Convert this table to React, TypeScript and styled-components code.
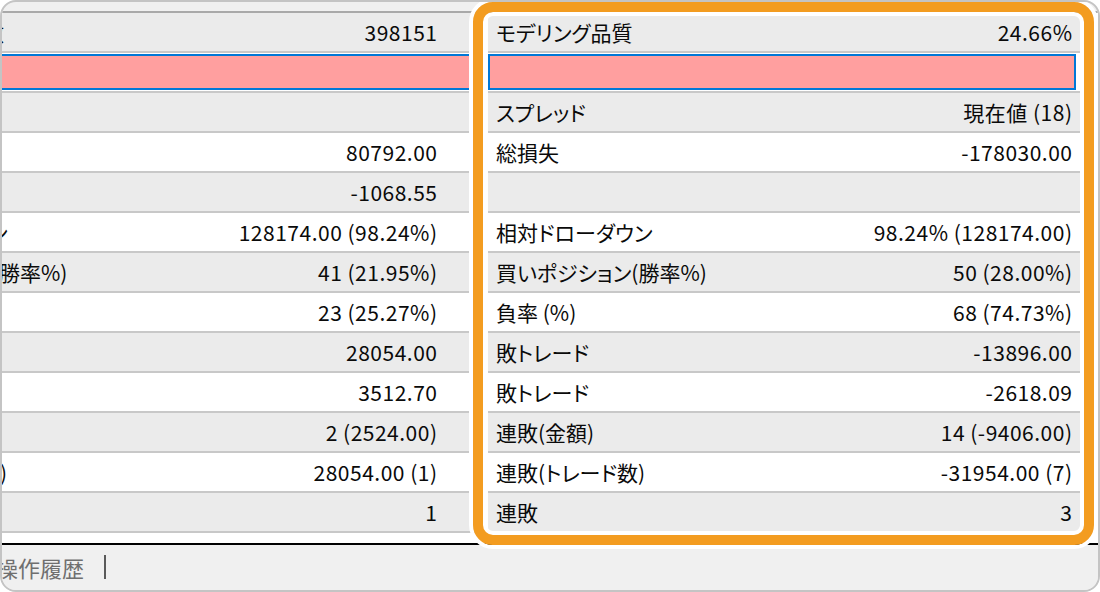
import React from 'react';
import styled, { createGlobalStyle } from 'styled-components';

const Global = createGlobalStyle`
  html, body { margin: 0; padding: 0; background: #fff; }
  body { font-family: "Noto Sans CJK JP", "Noto Sans", sans-serif; }
`;

const Frame = styled.div`
  position: relative;
  box-sizing: border-box;
  width: 1100px;
  height: 592px;
  border: 2px solid #c4c4c4;
  border-radius: 16px;
  background: #f0f0f0;
  overflow: hidden;
  display: flex;
  flex-direction: column;
  font-family: "Noto Sans CJK JP", "Noto Sans", sans-serif;
  font-size: 21px;
  font-feature-settings: "palt";
  color: #0a0a0a;
`;

const TopStrip = styled.div`
  flex: none;
  height: 9px;
  border-bottom: 2px solid #a9a9a9;
`;

const Tables = styled.div`
  flex: none;
  display: grid;
  grid-template-columns: 476px 10px 592px 1fr;
  background: #fff;
`;

const Panel = styled.div`
  display: flex;
  flex-direction: column;
  min-width: 0;
`;

type Tone = 'gray' | 'white';

const Row = styled.div<{ $tone: Tone; $side: 'left' | 'right' }>`
  box-sizing: border-box;
  height: 40px;
  display: flex;
  align-items: center;
  justify-content: space-between;
  border-bottom: 2px solid #c8c8c8;
  background: ${p => (p.$tone === 'gray' ? '#ebebeb' : '#fff')};
  padding: ${p => (p.$side === 'left' ? '0 41px 0 0' : '0 8px 0 8px')};
  white-space: nowrap;
  overflow: hidden;
  line-height: 1;
`;

const SelRow = styled.div<{ $boxed?: boolean }>`
  box-sizing: border-box;
  height: 40px;
  display: flex;
  flex-direction: column;
  background: #fff;
  border-bottom: 2px solid #c8c8c8;
  padding: 1px ${p => (p.$boxed ? '4px' : '0')} 1px 0;
`;

const SelBox = styled.div<{ $boxed?: boolean }>`
  flex: 1;
  background: #ff9f9f;
  border-top: 2px solid #0078d7;
  border-bottom: 2px solid #0078d7;
  border-left: ${p => (p.$boxed ? '2px solid #0078d7' : 'none')};
  border-right: ${p => (p.$boxed ? '2px solid #0078d7' : 'none')};
`;

const Label = styled.span<{ $shift?: number }>`
  display: inline-block;
  margin-left: ${p => -(p.$shift ?? 0)}px;
`;

const Value = styled.span`
  margin-left: auto;
  letter-spacing: 0.5px;
  margin-right: -0.5px;
`;

const Spacer = styled.div`
  background: #fff;
`;

const Gap = styled.div`
  flex: none;
  height: 10px;
  background: #fff;
  border-bottom: 2px solid #000;
`;

const TabBar = styled.div`
  flex: 1;
  display: flex;
  align-items: center;
  background: #f0f0f0;
  padding-bottom: 2px;
`;

const TabText = styled.span`
  margin-left: -6px;
  color: #6f6f6f;
  font-size: 22px;
  line-height: 1;
`;

const TabSep = styled.span`
  width: 2px;
  height: 24px;
  margin-left: 20px;
  background: #5a5a5a;
`;

const Highlight = styled.div`
  position: absolute;
  left: 471px;
  top: 0;
  width: 621px;
  height: 543px;
  box-sizing: border-box;
  border: 10px solid #f39c20;
  border-radius: 20px;
  box-shadow: 0 0 0 4px #fff, inset 0 0 0 4px #fff;
  pointer-events: none;
`;

type RowData = {
  lf?: string;
  ls?: number;
  lv?: string;
  r?: string;
  rv?: string;
  pink?: boolean;
};

const rows: RowData[] = [
  { lf: '数', ls: 19, lv: '398151', r: 'モデリング品質', rv: '24.66%' },
  { pink: true },
  { lv: '', r: 'スプレッド', rv: '現在値 (18)' },
  { lv: '80792.00', r: '総損失', rv: '-178030.00' },
  { lv: '-1068.55', r: '', rv: '' },
  { lf: 'ン', ls: 13, lv: '128174.00 (98.24%)', r: '相対ドローダウン', rv: '98.24% (128174.00)' },
  { lf: '勝率%)', ls: 3, lv: '41 (21.95%)', r: '買いポジション(勝率%)', rv: '50 (28.00%)' },
  { lv: '23 (25.27%)', r: '負率 (%)', rv: '68 (74.73%)' },
  { lv: '28054.00', r: '敗トレード', rv: '-13896.00' },
  { lv: '3512.70', r: '敗トレード', rv: '-2618.09' },
  { lv: '2 (2524.00)', r: '連敗(金額)', rv: '14 (-9406.00)' },
  { lf: ')', ls: 2, lv: '28054.00 (1)', r: '連敗(トレード数)', rv: '-31954.00 (7)' },
  { lv: '1', r: '連敗', rv: '3' },
];

export default function App() {
  return (
    <>
      <Global />
      <Frame>
        <TopStrip />
        <Tables>
          <Panel>
            {rows.map((row, i) =>
              row.pink ? (
                <SelRow key={i}>
                  <SelBox />
                </SelRow>
              ) : (
                <Row key={i} $side="left" $tone={i % 2 === 0 ? 'gray' : 'white'}>
                  <Label $shift={row.ls}>{row.lf ?? ''}</Label>
                  <Value>{row.lv}</Value>
                </Row>
              )
            )}
          </Panel>
          <Spacer />
          <Panel>
            {rows.map((row, i) =>
              row.pink ? (
                <SelRow key={i} $boxed>
                  <SelBox $boxed />
                </SelRow>
              ) : (
                <Row key={i} $side="right" $tone={i % 2 === 0 ? 'gray' : 'white'}>
                  <Label>{row.r}</Label>
                  <Value>{row.rv}</Value>
                </Row>
              )
            )}
          </Panel>
          <Spacer />
        </Tables>
        <Gap />
        <TabBar>
          <TabText>操作履歴</TabText>
          <TabSep />
        </TabBar>
        <Highlight />
      </Frame>
    </>
  );
}
